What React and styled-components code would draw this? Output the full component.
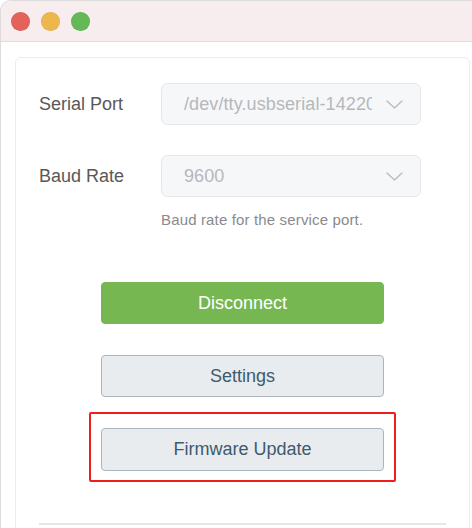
import React from "react";
import styled, { createGlobalStyle } from "styled-components";

const Global = createGlobalStyle`
  html, body { margin: 0; padding: 0; background: #ffffff; }
  body { font-family: "Liberation Sans", Arial, sans-serif; }
  * { box-sizing: border-box; }
`;

const Window = styled.div`
  width: 472px;
  height: 528px;
  overflow: hidden;
  background: #ffffff;
  border-top-left-radius: 11px;
  border-left: 1px solid #dcdcdc;
  border-top: 1px solid #dcdcdc;
`;

const TitleBar = styled.div`
  height: 41px;
  background: #f7edee;
  border-bottom: 1px solid #e2dddd;
  display: flex;
  align-items: center;
  padding-left: 10px;
  gap: 11px;
`;

const Light = styled.span`
  width: 19px;
  height: 19px;
  border-radius: 50%;
  background: ${(p) => p.$color};
  box-shadow: inset 0 0 0 0.5px rgba(0, 0, 0, 0.08);
`;

const Content = styled.div`
  padding: 15px 2px 0 14px;
`;

const Card = styled.div`
  border: 1px solid #ebebf0;
  border-radius: 6px;
  padding: 25px 23px 40px;
  display: flex;
  flex-direction: column;
`;

const Form = styled.div`
  display: flex;
  flex-direction: column;
  gap: 30px;
`;

const Row = styled.div`
  display: grid;
  grid-template-columns: 122px 260px;
  align-items: center;
`;

const Label = styled.div`
  font-size: 18px;
  color: #585858;
`;

const Select = styled.div`
  height: 42px;
  background: #f6f7f9;
  border: 1px solid #e5e7eb;
  border-radius: 6px;
  display: flex;
  align-items: center;
  padding: 0 17px 0 22px;
  gap: 14px;
`;

const SelectText = styled.span`
  flex: 1;
  min-width: 0;
  overflow: hidden;
  white-space: nowrap;
  font-size: 18px;
  letter-spacing: 0.1px;
  color: #b7b8bc;
`;

const Help = styled.div`
  margin: 14px 0 0 122px;
  font-size: 15px;
  line-height: 18px;
  letter-spacing: 0.15px;
  color: #8a8a8d;
`;

const Buttons = styled.div`
  display: flex;
  flex-direction: column;
  align-items: center;
  margin-top: 53px;
  gap: 31px;
`;

const Button = styled.button`
  width: 283px;
  height: ${(p) => (p.$tall ? 43 : 42)}px;
  border-radius: 4px;
  font-family: "Liberation Sans", Arial, sans-serif;
  font-size: 18px;
  cursor: pointer;
  padding: 0;
  border: 1px solid ${(p) => (p.$primary ? "#77b752" : "#a9b6bf")};
  background: ${(p) => (p.$primary ? "#77b752" : "#e8ecef")};
  color: ${(p) => (p.$primary ? "#ffffff" : "#3e5a6d")};
`;

const Highlight = styled.div`
  position: relative;
  &::after {
    content: "";
    position: absolute;
    top: -16px;
    bottom: -11px;
    left: -12px;
    right: -12px;
    border: 2px solid #f01d1d;
    border-radius: 2px;
    pointer-events: none;
  }
`;

const Divider = styled.hr`
  margin: 52px 0 0;
  border: none;
  border-top: 2px solid #e6e6ea;
`;

const Chevron = () => (
  <svg width="17" height="9" viewBox="0 0 17 9" fill="none">
    <path d="M1 1 L8.5 8 L16 1" stroke="#b9babe" strokeWidth="1.3" strokeLinecap="round" strokeLinejoin="round" />
  </svg>
);

export default function App() {
  return (
    <>
      <Global />
      <Window>
        <TitleBar>
          <Light $color="#e3625a" />
          <Light $color="#edb74d" />
          <Light $color="#62b955" />
        </TitleBar>
        <Content>
          <Card>
            <Form>
              <Row>
                <Label>Serial Port</Label>
                <Select>
                  <SelectText>/dev/tty.usbserial-14220</SelectText>
                  <Chevron />
                </Select>
              </Row>
              <Row>
                <Label>Baud Rate</Label>
                <Select>
                  <SelectText>9600</SelectText>
                  <Chevron />
                </Select>
              </Row>
            </Form>
            <Help>Baud rate for the service port.</Help>
            <Buttons>
              <Button $primary>Disconnect</Button>
              <Button>Settings</Button>
              <Highlight>
                <Button $tall>Firmware Update</Button>
              </Highlight>
            </Buttons>
            <Divider />
          </Card>
        </Content>
      </Window>
    </>
  );
}
